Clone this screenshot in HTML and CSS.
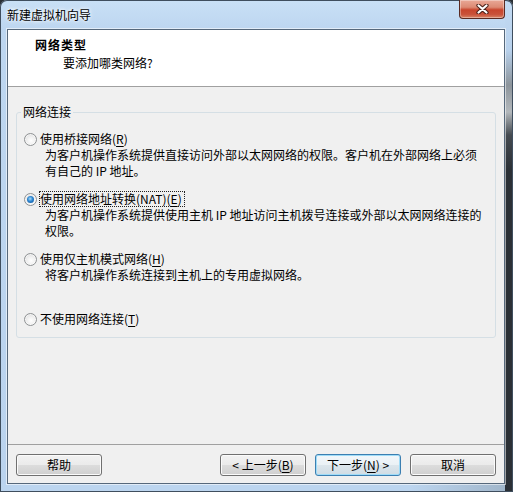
FILE: index.html
```html
<!DOCTYPE html>
<html lang="zh-CN">
<head>
<meta charset="utf-8">
<title>新建虚拟机向导</title>
<link rel="stylesheet" href="styles.css">
</head>
<body>
<div class="window">
  <div class="titlebar">
    <span class="title">新建虚拟机向导</span>
    <div class="close">
      <svg width="13" height="10" viewBox="0 0 13 10"><path d="M2.5 1.5 L10.5 8.5 M10.5 1.5 L2.5 8.5" stroke="#4b2019" stroke-width="4.2" stroke-linecap="round" fill="none"/><path d="M2.5 1.5 L10.5 8.5 M10.5 1.5 L2.5 8.5" stroke="#ffffff" stroke-width="2.2" stroke-linecap="round" fill="none"/></svg>
    </div>
  </div>
  <div class="client">
    <div class="header">
      <div class="h-title">网络类型</div>
      <div class="h-sub">要添加哪类网络?</div>
    </div>
    <div class="content">
      <div class="group">
        <div class="legend">网络连接</div>
        <div class="option">
          <div class="row"><span class="radio"></span><span class="label">使用桥接网络(<u>R</u>)</span></div>
          <div class="desc"><div>为客户机操作系统提供直接访问外部以太网网络的权限。客户机在外部网络上必须</div><div>有自己的 IP 地址。</div></div>
        </div>
        <div class="option">
          <div class="row"><span class="radio checked"></span><span class="label focus">使用网络地址转换(NAT)(<u>E</u>)</span></div>
          <div class="desc"><div>为客户机操作系统提供使用主机 IP 地址访问主机拨号连接或外部以太网网络连接的</div><div>权限。</div></div>
        </div>
        <div class="option">
          <div class="row"><span class="radio"></span><span class="label">使用仅主机模式网络(<u>H</u>)</span></div>
          <div class="desc"><div>将客户机操作系统连接到主机上的专用虚拟网络。</div></div>
        </div>
        <div class="option">
          <div class="row"><span class="radio"></span><span class="label">不使用网络连接(<u>T</u>)</span></div>
        </div>
      </div>
      <div class="footer">
        <button class="btn">帮助</button>
        <span class="spacer"></span>
        <button class="btn">&lt; 上一步(<u>B</u>)</button>
        <button class="btn default">下一步(<u>N</u>) &gt;</button>
        <button class="btn">取消</button>
      </div>
    </div>
  </div>
</div>
</body>
</html>
```

FILE: styles.css
```css
* { box-sizing: border-box; }
html, body { margin: 0; padding: 0; }
body {
  width: 513px;
  height: 492px;
  overflow: hidden;
  font-family: "Noto Sans CJK SC", "Microsoft YaHei", sans-serif;
  font-size: 12px;
  color: #000;
  background: #2a2f35;
}
.window {
  position: relative;
  width: 513px;
  height: 492px;
  display: flex;
  flex-direction: column;
  border-radius: 7px 7px 0 0;
  background:
    linear-gradient(to bottom, #c3dbf3 0, #b8d1ec 50px, #8c949b 85px, #b3b8bc 112px, #454b51 135px, #2b3036 170px, #2b3036 100%) right top / 8px 100% no-repeat,
    linear-gradient(to right, #bcd5ef 0, #bcd5ef 80%, #9fb4c8 100%) left bottom / 100% 8px no-repeat,
    linear-gradient(to bottom, #c9e0f6 0, #bdd6f0 29px, #bad3ee 100%);
  box-shadow: inset 0 0 0 1px #3f4e5e;
}
.titlebar {
  height: 29px;
  display: flex;
  align-items: center;
  padding-left: 7px;
}
.title {
  font-size: 12px;
  line-height: 16px;
  text-shadow: 0 0 5px #fff, 0 0 3px #fff;
}
.close {
  position: absolute;
  left: 459px;
  top: 0;
  width: 46px;
  height: 19px;
  border: 1px solid #5a2a22;
  border-top: none;
  border-radius: 0 0 4px 4px;
  background: linear-gradient(to bottom, #e9a897 0, #dc8a74 40%, #c8452d 55%, #c9523a 80%, #d88466 100%);
  box-shadow: inset 0 0 0 1px rgba(255,255,255,.35);
  display: flex;
  align-items: center;
  justify-content: center;
}
.client {
  margin-left: 7px;
  width: 498px;
  height: 455px;
  border: 1px solid #56687b;
  box-shadow: 0 0 0 1px rgba(255,255,255,.55);
  background: #f0f0f0;
  display: flex;
  flex-direction: column;
}
.header {
  height: 57px;
  background: #fff;
  border-bottom: 1px solid #a0a0a0;
  padding: 7px 0 0 27px;
}
.h-title {
  font-weight: bold;
  line-height: 16px;
  letter-spacing: 1px;
}
.h-sub {
  margin-top: 2px;
  padding-left: 28px;
  line-height: 16px;
}
.content {
  flex: 1;
  display: flex;
  flex-direction: column;
}
.group {
  position: relative;
  margin: 25px 0 0 8px;
  width: 480px;
  height: 226px;
  border: 1px solid #d5dfe5;
  border-radius: 3px;
  padding: 18px 0 0 7px;
}
.legend {
  position: absolute;
  top: -9px;
  left: 4px;
  padding: 0 2px;
  line-height: 16px;
  background: #f0f0f0;
}
.option { height: 60px; }
.row {
  display: flex;
  align-items: center;
  height: 16px;
}
.radio {
  position: relative;
  width: 13px;
  height: 13px;
  border-radius: 50%;
  border: 1px solid #8f9294;
  background: radial-gradient(circle at 55% 60%, #ffffff 0, #f3f3f3 35%, #d6d6d6 100%);
  box-shadow: inset 0 0 0 1px rgba(255,255,255,.6);
  flex: none;
}
.radio.checked::after {
  content: "";
  position: absolute;
  left: 2px;
  top: 2px;
  width: 7px;
  height: 7px;
  border-radius: 50%;
  background: radial-gradient(circle at 45% 40%, #a9dcf7 0, #2b84d0 45%, #0b4e92 100%);
}
.label {
  margin-left: 2px;
  border: 1px solid transparent;
  padding-right: 2px;
  line-height: 14px;
  white-space: nowrap;
}
.label.focus { border: 1px dotted #222; }
.desc {
  padding-left: 21px;
  line-height: 16px;
  white-space: nowrap;
}
u { text-decoration: underline; text-underline-offset: 2px; }
.footer {
  margin-top: auto;
  border-top: 1px solid #a0a0a0;
  padding: 9px 8px 7px 8px;
  display: flex;
  gap: 9px;
}
.spacer { flex: 1; }
.btn {
  width: 86px;
  height: 22px;
  padding: 0;
  font-family: inherit;
  font-size: 12px;
  color: #000;
  border: 1px solid #707070;
  border-radius: 3px;
  background: linear-gradient(to bottom, #f2f2f2 0, #ebebeb 50%, #dddddd 50%, #cfcfcf 100%);
  box-shadow: inset 0 0 0 1px #fbfbfb;
  line-height: 18px;
}
.btn.default {
  border-color: #3c7fb1;
  box-shadow: inset 0 0 0 1px #9fdcf8;
  background: linear-gradient(to bottom, #f2f7fa 0, #eaf1f5 50%, #dce6ec 50%, #d0dce4 100%);
}
```
